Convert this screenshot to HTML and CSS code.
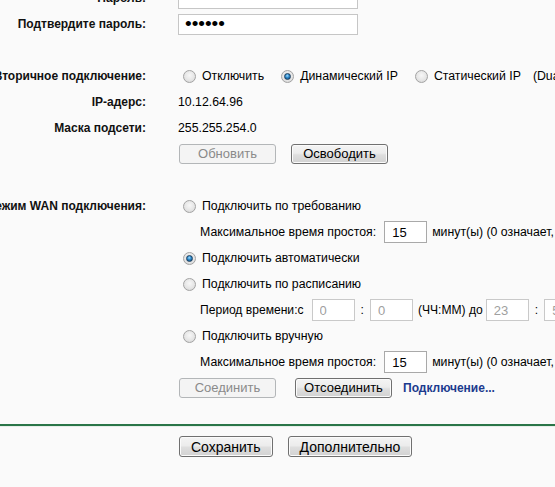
FILE: index.html
```html
<!DOCTYPE html>
<html lang="ru">
<head>
<meta charset="utf-8">
<title>WAN</title>
<link rel="stylesheet" href="styles.css">
</head>
<body>
<div class="page">
  <div class="row">
    <div class="lbl">Пароль:</div>
    <div class="val"><input class="pw" type="password" value="123456"></div>
  </div>
  <div class="row">
    <div class="lbl">Подтвердите пароль:</div>
    <div class="val"><input class="pw" type="password" value="123456"></div>
  </div>
  <div class="row"></div>
  <div class="row">
    <div class="lbl">Вторичное подключение:</div>
    <div class="val">
      <span class="opt"><span class="radio"></span>Отключить</span>
      <span class="opt"><span class="radio checked"></span>Динамический IP</span>
      <span class="opt"><span class="radio"></span>Статический IP</span>
      <span>(Dual Access для Россия)</span>
    </div>
  </div>
  <div class="row">
    <div class="lbl">IP-адерс:</div>
    <div class="val">10.12.64.96</div>
  </div>
  <div class="row">
    <div class="lbl">Маска подсети:</div>
    <div class="val">255.255.254.0</div>
  </div>
  <div class="row">
    <div class="lbl"></div>
    <div class="val btns">
      <button class="btn fixed" disabled>Обновить</button>
      <button class="btn fixed">Освободить</button>
    </div>
  </div>
  <div class="row"></div>
  <div class="row">
    <div class="lbl">Режим WAN подключения:</div>
    <div class="val"><span class="opt"><span class="radio"></span>Подключить по требованию</span></div>
  </div>
  <div class="row">
    <div class="lbl"></div>
    <div class="val sub">
      <span>Максимальное время простоя:</span>
      <input class="num idle" type="text" value="15">
      <span class="after">минут(ы) (0 означает, что соединение будет активно всегда)</span>
    </div>
  </div>
  <div class="row">
    <div class="lbl"></div>
    <div class="val"><span class="opt"><span class="radio checked"></span>Подключить автоматически</span></div>
  </div>
  <div class="row">
    <div class="lbl"></div>
    <div class="val"><span class="opt"><span class="radio"></span>Подключить по расписанию</span></div>
  </div>
  <div class="row">
    <div class="lbl"></div>
    <div class="val sub period">
      <span>Период времени:с</span>
      <input class="num off first" type="text" value="0" disabled>
      <span class="colon">:</span>
      <input class="num off" type="text" value="0" disabled>
      <span class="hm">(ЧЧ:ММ) до</span>
      <input class="num off" type="text" value="23" disabled>
      <span class="colon">:</span>
      <input class="num off" type="text" value="59" disabled>
      <span class="hm">(ЧЧ:ММ)</span>
    </div>
  </div>
  <div class="row">
    <div class="lbl"></div>
    <div class="val"><span class="opt"><span class="radio"></span>Подключить вручную</span></div>
  </div>
  <div class="row">
    <div class="lbl"></div>
    <div class="val sub">
      <span>Максимальное время простоя:</span>
      <input class="num idle" type="text" value="15">
      <span class="after">минут(ы) (0 означает, что соединение будет активно всегда)</span>
    </div>
  </div>
  <div class="row">
    <div class="lbl"></div>
    <div class="val btns2">
      <button class="btn fixed" disabled>Соединить</button>
      <button class="btn fixed">Отсоединить</button>
      <a class="link" href="#">Подключение...</a>
    </div>
  </div>
  <div class="divider"></div>
  <div class="footer">
    <button class="btn big">Сохранить</button>
    <button class="btn big">Дополнительно</button>
  </div>
</div>
</body>
</html>
```
FILE: styles.css
```css
html, body {
  margin: 0;
  padding: 0;
  overflow: hidden;
  background: #fafafa;
}
body {
  font-family: "Liberation Sans", Arial, sans-serif;
  font-size: 12px;
  color: #000;
}
.page {
  margin-top: -15px;
  width: 555px;
}
.row {
  display: flex;
  align-items: center;
  height: 26px;
  white-space: nowrap;
}
.lbl {
  flex: none;
  width: 146px;
  display: flex;
  justify-content: flex-end;
  font-weight: bold;
  color: #111;
}
.val {
  margin-left: 32px;
  display: flex;
  align-items: center;
  font-size: 12.3px;
}
.pw {
  box-sizing: border-box;
  width: 180px;
  height: 21px;
  border: 1px solid #c6c6c6;
  background: #fff;
  padding: 0 6px;
  font-family: "Liberation Sans", Arial, sans-serif;
  font-size: 19px;
  color: #000;
  outline: none;
}
.opt {
  display: flex;
  align-items: center;
  margin-right: 12px;
}
.radio {
  position: relative;
  box-sizing: border-box;
  width: 13px;
  height: 13px;
  border-radius: 50%;
  border: 1px solid #a3a3a3;
  background: radial-gradient(circle at 50% 40%, #f7f7f7 0%, #e4e4e4 60%, #cfcfcf 100%);
  margin-left: 5px;
  margin-right: 6px;
  flex: none;
}
.radio.checked::after {
  content: "";
  position: absolute;
  left: 2px;
  top: 2px;
  width: 7px;
  height: 7px;
  box-sizing: border-box;
  border-radius: 50%;
  border: 1px solid #1d3f5e;
  background: radial-gradient(circle at 45% 35%, #9fdcff 0%, #2b86c8 45%, #0c4575 100%);
}
.btns {
  margin-left: 33px;
  gap: 15px;
}
.btns2 {
  margin-left: 33px;
}
.btns2 .btn + .btn {
  margin-left: 19px;
}
.btn {
  box-sizing: border-box;
  height: 20px;
  font-family: "Liberation Sans", Arial, sans-serif;
  font-size: 13px;
  color: #000;
  border: 1px solid #707070;
  border-radius: 3px;
  background: linear-gradient(to bottom, #f4f4f4 0%, #ececec 45%, #dedede 55%, #d2d2d2 100%);
  box-shadow: inset 0 0 0 1px #fbfbfb;
  padding: 0;
  line-height: 16px;
}
.btn.fixed {
  width: 97px;
}
.btn:disabled {
  background: #f4f4f4;
  border-color: #b3b6b8;
  color: #8a8a8a;
  box-shadow: none;
}
.link {
  margin-left: 11px;
  font-size: 12px;
  font-weight: bold;
  color: #1c3b8e;
  text-decoration: none;
}
.sub {
  padding-left: 22px;
}
.period {
  font-size: 12.1px;
}
.num {
  box-sizing: border-box;
  width: 43px;
  height: 22px;
  border: 1px solid #a9a9a9;
  background: #fff;
  padding: 0 7px;
  font-family: "Liberation Sans", Arial, sans-serif;
  font-size: 13px;
  color: #000;
  outline: none;
}
.idle {
  margin-left: 8px;
}
.after {
  margin-left: 5px;
}
.num.off {
  border-color: #c9c9c9;
  color: #a0a0a0;
  background: #fff;
}
.num.first {
  margin-left: 8px;
}
.colon {
  margin: 0 6px;
}
.hm {
  margin: 0 3px 0 5px;
}
.divider {
  margin-top: 23px;
  height: 0;
  border-top: 2px solid #2a7548;
  border-bottom: 1px solid #e6efe9;
}
.footer {
  display: flex;
  gap: 15px;
  padding-left: 179px;
  margin-top: 9px;
}
.btn.big {
  height: 21px;
  font-size: 14px;
  padding: 0 11px;
}
```
